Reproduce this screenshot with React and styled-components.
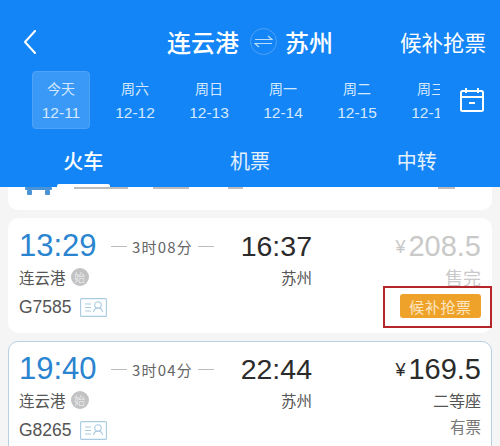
import styled, { createGlobalStyle } from 'styled-components';

const GlobalStyle = createGlobalStyle`
  html, body { margin: 0; padding: 0; background: #f5f5f6; }
  body { font-family: "Noto Sans CJK SC", "Liberation Sans", sans-serif; }
`;

const days = [
  ['今天', '12-11'],
  ['周六', '12-12'],
  ['周日', '12-13'],
  ['周一', '12-14'],
  ['周二', '12-15'],
  ['周三', '12-16'],
];

const trains = [
  { dep: '13:29', dur: '3时08分', arr: '16:37', price: '208.5', seat: '售完', no: 'G7585', soldOut: true },
  { dep: '19:40', dur: '3时04分', arr: '22:44', price: '169.5', seat: '二等座', no: 'G8265', left: '有票', active: true },
];

const stubs = [
  { gap: 22, w: 30 },
  { gap: 0, w: 24 },
  { gap: 25, w: 36 },
  { gap: 39, w: 15 },
  { gap: 195, w: 17 },
];

const Page = styled.div`
  width: 500px;
  height: 446px;
  overflow: hidden;
  display: flex;
  flex-direction: column;
`;

const Header = styled.header`
  height: 187px;
  flex: none;
  background: #1485f6;
  color: #fff;
  position: relative;
  z-index: 1;
`;

const HeaderNotch = styled.span`
  position: absolute;
  left: 57px;
  bottom: 0;
  width: 53px;
  height: 3px;
  background: #fff;
  border-radius: 2px 2px 0 0;
`;

const TopBar = styled.div`
  height: 41px;
  padding: 21px 14px 0 23px;
  display: flex;
  align-items: center;
`;

const Route = styled.div`
  display: flex;
  align-items: center;
  gap: 8px;
  margin-left: 130px;
  font-size: 24px;
  font-weight: 500;
`;

const SwapCircle = styled.span`
  width: 27px;
  height: 27px;
  box-sizing: border-box;
  margin-left: 3px;
  border: 1px solid #4fa3f8;
  border-radius: 50%;
  display: flex;
  align-items: center;
  justify-content: center;
`;

const TopAction = styled.span`
  margin-left: auto;
  font-size: 21.5px;
`;

const DateRow = styled.div`
  display: flex;
  align-items: center;
  margin-top: 9px;
  padding-left: 32px;
`;

const DateStrip = styled.div`
  width: 408px;
  overflow: hidden;
  display: flex;
  gap: 16px;
  flex: none;
  margin-right: 19px;
`;

const DateItem = styled.div`
  width: 58px;
  height: 58px;
  flex: none;
  box-sizing: border-box;
  border-radius: 4px;
  display: flex;
  flex-direction: column;
  align-items: center;
  justify-content: center;
  gap: 5px;
  color: #d5e9fe;
  background: ${(p) => (p.$active ? '#3a99f7' : 'transparent')};
  border: 1px solid ${(p) => (p.$active ? '#4ea3f8' : 'transparent')};
`;

const DayName = styled.span`
  font-size: 14px;
  line-height: 20px;
`;

const DayDate = styled.span`
  font-size: 15.5px;
  line-height: 20px;
  font-family: "Liberation Sans", sans-serif;
`;

const Tabs = styled.div`
  display: grid;
  grid-template-columns: repeat(3, 1fr);
  margin-top: 18px;
`;

const Tab = styled.span`
  text-align: center;
  font-size: 20px;
  line-height: 28px;
  color: ${(p) => (p.$active ? '#fff' : '#e3f0fe')};
  font-weight: ${(p) => (p.$active ? 500 : 400)};
`;

const List = styled.main`
  flex: 1;
  overflow: hidden;
  padding: 0 8px;
  display: flex;
  flex-direction: column;
  gap: 8px;
`;

const PartialCard = styled.div`
  height: 23px;
  flex: none;
  box-sizing: border-box;
  padding-left: 17px;
  background: #fff;
  border-radius: 0 0 10px 10px;
  display: flex;
  align-items: flex-start;
`;

const Stub = styled.span`
  height: 2px;
  width: ${(p) => p.$w}px;
  margin-left: ${(p) => p.$gap}px;
  background: #bdbdbd;
  flex: none;
`;

const Card = styled.article`
  flex: none;
  height: 115px;
  box-sizing: border-box;
  background: #fff;
  border-radius: 10px;
  border: 1px solid ${(p) => (p.$active ? '#b9cfe2' : '#fff')};
  padding: 9px 10px 0;
  display: grid;
  grid-template-columns: 203px 90px 1fr;
`;

const Left = styled.div`
  display: flex;
  flex-direction: column;
`;

const TimeRow = styled.div`
  display: flex;
  align-items: center;
  height: 36px;
`;

const DepTime = styled.span`
  font-family: "Liberation Sans", sans-serif;
  font-size: 31px;
  color: #2a84d0;
  width: 92px;
  flex: none;
`;

const Duration = styled.span`
  font-size: 15px;
  letter-spacing: 1.2px;
  color: #666;
  display: flex;
  align-items: center;
  gap: 5px;
  &::before, &::after {
    content: '';
    height: 1px;
    width: 16px;
    background: #bbb;
    flex: none;
  }
`;

const Middle = styled.div`
  display: flex;
  flex-direction: column;
  align-items: flex-end;
`;

const ArrTime = styled.span`
  font-family: "Liberation Sans", sans-serif;
  font-size: 28.5px;
  line-height: 36px;
  color: #2b2b2b;
`;

const StationRow = styled.div`
  display: flex;
  align-items: center;
  height: 26px;
  font-size: 15.5px;
  color: #555;
`;

const StartBadge = styled.span`
  width: 18px;
  height: 18px;
  margin-left: 5px;
  border-radius: 50%;
  background: #c2c2c4;
  color: #e8e8e8;
  font-size: 11px;
  display: flex;
  align-items: center;
  justify-content: center;
`;

const TrainRow = styled.div`
  display: flex;
  align-items: center;
  gap: 8px;
  margin-top: 7px;
  font-family: "Liberation Sans", sans-serif;
  font-size: 17.5px;
  color: #555;
`;

const Right = styled.div`
  display: flex;
  flex-direction: column;
  align-items: flex-end;
`;

const Price = styled.span`
  height: 36px;
  display: flex;
  align-items: center;
  gap: 3px;
  font-family: "Liberation Sans", sans-serif;
  font-size: 29px;
  color: ${(p) => (p.$muted ? '#c9c9c9' : '#2b2b2b')};
`;

const Yen = styled.span`
  font-size: 18px;
  margin-top: 3px;
`;

const Seat = styled.span`
  font-size: ${(p) => (p.$muted ? 18 : 16)}px;
  line-height: 26px;
  color: ${(p) => (p.$muted ? '#c9c9c9' : '#555')};
`;

const TicketsLeft = styled.span`
  font-size: 15.5px;
  line-height: 20px;
  margin-top: 3px;
  color: #777;
`;

const Highlight = styled.div`
  position: absolute;
  left: 383px;
  top: 286px;
  width: 109px;
  height: 42px;
  box-sizing: border-box;
  border: 2px solid #b5252a;
  padding: 6px 9px 0 0;
  display: flex;
  justify-content: flex-end;
`;

const WaitButton = styled.span`
  width: 81px;
  height: 24px;
  border-radius: 3px;
  background: #efa22a;
  color: #fbe6c3;
  font-size: 15px;
  letter-spacing: 0.6px;
  display: flex;
  align-items: center;
  justify-content: center;
`;

const BackIcon = () => (
  <svg width="14" height="24" viewBox="0 0 14 24" fill="none" stroke="#fff" strokeWidth="2" strokeLinecap="round" strokeLinejoin="round">
    <path d="M12 1 2 12l10 11" />
  </svg>
);

const SwapIcon = () => (
  <svg width="19" height="13" viewBox="0 0 19 13" fill="none" stroke="#b9dcfc" strokeWidth="1.2">
    <path d="M1 4.5h17L14 1M18 8.5H1l4 3.5" />
  </svg>
);

const CalendarIcon = () => (
  <svg width="26" height="26" viewBox="0 0 26 26" fill="none" stroke="#fff" strokeWidth="2">
    <rect x="2" y="4" width="22" height="20" rx="1.5" />
    <path d="M2 10h22M7 1v5M19 1v5M10 16h6" />
  </svg>
);

const IdIcon = () => (
  <svg width="27" height="19" viewBox="0 0 27 19" fill="none" stroke="#a9cbe0" strokeWidth="1.1">
    <rect x="0.6" y="0.6" width="25.8" height="17.8" rx="1" />
    <path d="M5 6h6M5 9.5h6M5 13h6" />
    <circle cx="18" cy="7" r="3.2" />
    <path d="M13.5 14c.5-3 2-4 4.5-4s4 1 4.5 4" />
  </svg>
);

const BusStub = () => (
  <svg width="27" height="9" viewBox="0 0 27 9" fill="#4a93d6">
    <rect x="0" y="0" width="27" height="3" rx="1" />
    <rect x="2" y="3" width="5" height="5" rx="1" />
    <rect x="20" y="3" width="5" height="5" rx="1" />
  </svg>
);

const App = () => (
  <Page>
    <GlobalStyle />
    <Header>
      <TopBar>
        <BackIcon />
        <Route>
          <span>连云港</span>
          <SwapCircle><SwapIcon /></SwapCircle>
          <span>苏州</span>
        </Route>
        <TopAction>候补抢票</TopAction>
      </TopBar>
      <DateRow>
        <DateStrip>
          {days.map(([name, date], i) => (
            <DateItem key={date} $active={i === 0}>
              <DayName>{name}</DayName>
              <DayDate>{date}</DayDate>
            </DateItem>
          ))}
        </DateStrip>
        <CalendarIcon />
      </DateRow>
      <Tabs>
        <Tab $active>火车</Tab>
        <Tab>机票</Tab>
        <Tab>中转</Tab>
      </Tabs>
      <HeaderNotch />
    </Header>
    <List>
      <PartialCard>
        <BusStub />
        {stubs.map((s) => (
          <Stub key={`${s.gap}-${s.w}`} $gap={s.gap} $w={s.w} />
        ))}
      </PartialCard>
      {trains.map((t) => (
        <Card key={t.no} $active={t.active}>
          <Left>
            <TimeRow>
              <DepTime>{t.dep}</DepTime>
              <Duration>{t.dur}</Duration>
            </TimeRow>
            <StationRow>
              连云港<StartBadge>始</StartBadge>
            </StationRow>
            <TrainRow>
              {t.no}
              <IdIcon />
            </TrainRow>
          </Left>
          <Middle>
            <ArrTime>{t.arr}</ArrTime>
            <StationRow>苏州</StationRow>
          </Middle>
          <Right>
            <Price $muted={t.soldOut}><Yen>¥</Yen>{t.price}</Price>
            <Seat $muted={t.soldOut}>{t.seat}</Seat>
            {t.left && <TicketsLeft>{t.left}</TicketsLeft>}
          </Right>
        </Card>
      ))}
    </List>
    <Highlight>
      <WaitButton>候补抢票</WaitButton>
    </Highlight>
  </Page>
);

export default App;
